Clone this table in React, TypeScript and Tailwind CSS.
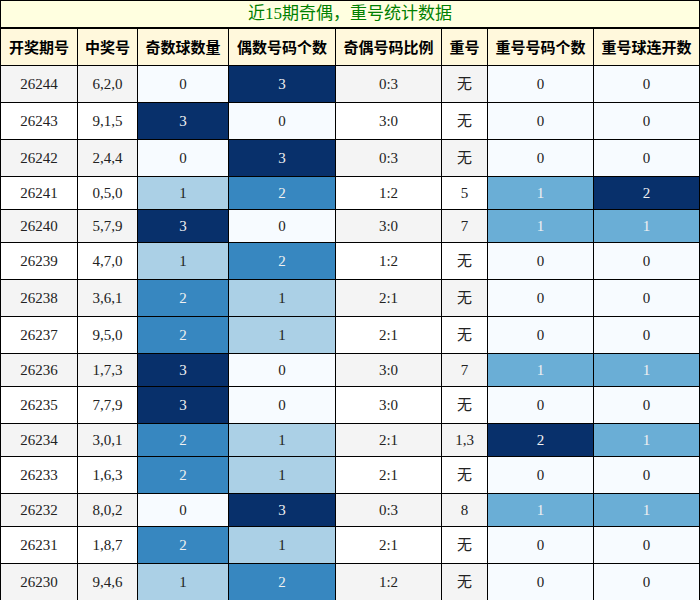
import React from "react";

type Row = [string, string, number, number, string, string, number, number];

const rows: Row[] = [
  ["26244", "6,2,0", 0, 3, "0:3", "无", 0, 0],
  ["26243", "9,1,5", 3, 0, "3:0", "无", 0, 0],
  ["26242", "2,4,4", 0, 3, "0:3", "无", 0, 0],
  ["26241", "0,5,0", 1, 2, "1:2", "5", 1, 2],
  ["26240", "5,7,9", 3, 0, "3:0", "7", 1, 1],
  ["26239", "4,7,0", 1, 2, "1:2", "无", 0, 0],
  ["26238", "3,6,1", 2, 1, "2:1", "无", 0, 0],
  ["26237", "9,5,0", 2, 1, "2:1", "无", 0, 0],
  ["26236", "1,7,3", 3, 0, "3:0", "7", 1, 1],
  ["26235", "7,7,9", 3, 0, "3:0", "无", 0, 0],
  ["26234", "3,0,1", 2, 1, "2:1", "1,3", 2, 1],
  ["26233", "1,6,3", 2, 1, "2:1", "无", 0, 0],
  ["26232", "8,0,2", 0, 3, "0:3", "8", 1, 1],
  ["26231", "1,8,7", 2, 1, "2:1", "无", 0, 0],
  ["26230", "9,4,6", 1, 2, "1:2", "无", 0, 0],
];

const headers = ["开奖期号", "中奖号", "奇数球数量", "偶数号码个数", "奇偶号码比例", "重号", "重号号码个数", "重号球连开数"];

const gridCols = "grid grid-cols-[77px_60px_91px_107px_106px_46px_106px_106px]";

const oddEvenClass: Record<number, string> = {
  0: "bg-[#f7fbff] text-[#222222]",
  1: "bg-[#abd0e6] text-[#222222]",
  2: "bg-[#3787c0] text-[#f1f1f1]",
  3: "bg-[#08306b] text-[#f1f1f1]",
};

const repeatClass: Record<number, string> = {
  0: "bg-[#f7fbff] text-[#222222]",
  1: "bg-[#6aaed6] text-[#f1f1f1]",
  2: "bg-[#08306b] text-[#f1f1f1]",
};

const cellBase = "flex items-center justify-center border-r border-black";

export default function App() {
  return (
    <div className="w-[700px] bg-white">
      <div
        className="w-[700px] border-l border-t border-black"
        style={{ fontFamily: '"Liberation Serif", "Noto Sans CJK SC", serif' }}
      >
        <div
          className="flex h-[28px] items-center justify-center border-b-2 border-r border-black bg-[#ffffe0] text-[17px] text-[#008000]"
          style={{ fontFamily: '"Liberation Serif", "Noto Sans CJK SC", sans-serif' }}
        >
          近15期奇偶，重号统计数据
        </div>
        <div
          className={`${gridCols} h-[37px] border-b border-black bg-[#fff8dc] text-[15px] font-bold text-black`}
          style={{ fontFamily: '"Noto Sans CJK SC", sans-serif' }}
        >
          {headers.map((h) => (
            <div key={h} className={cellBase}>
              {h}
            </div>
          ))}
        </div>
        {rows.map((r, i) => {
          const tall = r[5] === "无";
          const plain = i % 2 === 0 ? "bg-[#f4f4f4] text-[#222222]" : "bg-white text-[#222222]";
          return (
            <div
              key={r[0]}
              className={`${gridCols} ${tall ? "h-[37px]" : "h-[33px]"} border-b border-black text-[15px]`}
            >
              <div className={`${cellBase} ${plain}`}>{r[0]}</div>
              <div className={`${cellBase} ${plain}`}>{r[1]}</div>
              <div className={`${cellBase} ${oddEvenClass[r[2]]}`}>{r[2]}</div>
              <div className={`${cellBase} ${oddEvenClass[r[3]]}`}>{r[3]}</div>
              <div className={`${cellBase} ${plain}`}>{r[4]}</div>
              <div className={`${cellBase} ${plain}`}>{r[5]}</div>
              <div className={`${cellBase} ${repeatClass[r[6]]}`}>{r[6]}</div>
              <div className={`${cellBase} ${repeatClass[r[7]]}`}>{r[7]}</div>
            </div>
          );
        })}
      </div>
    </div>
  );
}
